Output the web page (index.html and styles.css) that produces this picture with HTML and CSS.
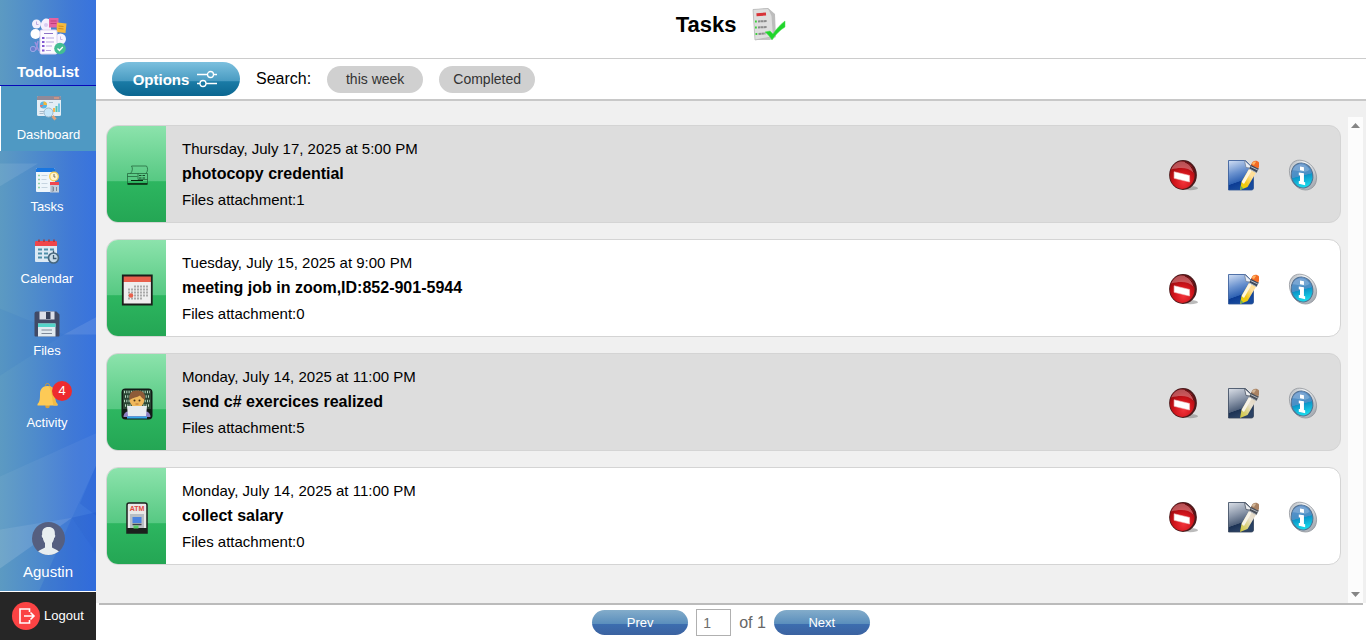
FILE: index.html
```html
<!DOCTYPE html>
<html lang="en">
<head>
<meta charset="utf-8">
<meta name="viewport" content="width=device-width, initial-scale=1">
<title>TodoList - Tasks</title>
<link rel="stylesheet" href="styles.css">
</head>
<body>
<svg class="defs" aria-hidden="true">
  <defs>
    <radialGradient id="gRed" cx=".55" cy=".75" r=".75"><stop offset="0" stop-color="#f2333a"/><stop offset=".5" stop-color="#d0141b"/><stop offset="1" stop-color="#8f060b"/></radialGradient>
    <linearGradient id="gDoc" x1="0" y1="0" x2=".3" y2="1"><stop offset="0" stop-color="#d3e0f4"/><stop offset=".45" stop-color="#6a92cf"/><stop offset=".76" stop-color="#2f62b3"/><stop offset=".78" stop-color="#0c3c94"/><stop offset="1" stop-color="#174a9c"/></linearGradient>
    <linearGradient id="gDocOff" x1="0" y1="0" x2=".3" y2="1"><stop offset="0" stop-color="#dbe0e8"/><stop offset=".45" stop-color="#8b97aa"/><stop offset=".76" stop-color="#4e5f79"/><stop offset=".78" stop-color="#1c3254"/><stop offset="1" stop-color="#2b4264"/></linearGradient>
    <linearGradient id="gPen" x1="1" y1="0" x2="0" y2="1"><stop offset="0" stop-color="#ffe08a"/><stop offset=".4" stop-color="#ffdf9c"/><stop offset=".7" stop-color="#f2c713"/><stop offset="1" stop-color="#e5d800"/></linearGradient>
    <linearGradient id="gPenOff" x1="1" y1="0" x2="0" y2="1"><stop offset="0" stop-color="#ddd0b8"/><stop offset=".45" stop-color="#e8e0d0"/><stop offset=".75" stop-color="#d8cf70"/><stop offset="1" stop-color="#cfc83a"/></linearGradient>
    <linearGradient id="gInfo" x1="0" y1="0" x2="0" y2="1"><stop offset="0" stop-color="#5f8fc8"/><stop offset=".5" stop-color="#4790c6"/><stop offset=".52" stop-color="#0c94c8"/><stop offset="1" stop-color="#19e0ee"/></linearGradient>
    <linearGradient id="gRim" x1="0" y1="0" x2="1" y2="1"><stop offset="0" stop-color="#9ba1a8"/><stop offset=".3" stop-color="#f3f5f7"/><stop offset=".65" stop-color="#c9cdd2"/><stop offset="1" stop-color="#9298a0"/></linearGradient>
  </defs>
  <symbol id="remove" viewBox="0 0 32 34">
    <ellipse cx="24" cy="31" rx="8" ry="2.200" fill="#777" opacity=".5"/>
    <ellipse cx="16" cy="17" rx="14.800" ry="16" fill="#4c1a1c"/>
    <ellipse cx="15.200" cy="17" rx="13.200" ry="14.800" fill="url(#gRed)"/>
    <path d="M3.500 11C8 1 18 0 25 8l3 7C21 8 12 9 3.500 11z" fill="#fff" opacity=".3"/>
    <path d="M18 3c5 2 8 6 10 12" stroke="#5c0a0d" fill="none"/>
    <path d="M6.500 13.500l16.500 4v7l-16.500-4z" fill="#fff" stroke="#f3c5c5" stroke-width=".6"/>
  </symbol>
  <symbol id="edit" viewBox="0 0 32 32">
    <path d="M1.500 1.500h17l8 8v19.500a2 2 0 0 1-2 2h-23z" fill="url(#gDoc)" stroke="#2c5394" stroke-width=".8"/>
    <path d="M17.500 1.500l1.500 7 7.500 1z" fill="#e9eef5" stroke="#6a7890" stroke-width=".7"/>
    <path d="M13 31l1.500-8L24 6.500l7 4L20.500 28z" fill="url(#gPen)"/>
    <path d="M14.500 23L24 7l2.500 1.500L17 25z" fill="#fff6dc"/>
    <path d="M22 10l7.500 4 2.300-4.500L24.500 5z" fill="#3d4a5e"/>
    <path d="M22.500 10l7 3.800M23.800 7.700l7 3.300" stroke="#d4dbe4" stroke-width=".8"/>
    <path d="M24.200 6C25 2 28 1 30.500 2.200s2.500 3.500.8 7.200z" fill="#f36b25"/>
    <path d="M25 5c1-2.500 3-3 4-2l-2 3z" fill="#ffb45f"/>
    <path d="M13 31l1-4 2.500 2.500z" fill="#6fae5c"/>
  </symbol>
  <symbol id="edit-off" viewBox="0 0 32 32">
    <path d="M1.500 1.500h17l8 8v19.500a2 2 0 0 1-2 2h-23z" fill="url(#gDocOff)" stroke="#334259" stroke-width=".8"/>
    <path d="M17.500 1.500l1.500 7 7.500 1z" fill="#eceef1" stroke="#4c5563" stroke-width=".8"/>
    <path d="M13 31l1.500-8L24 6.500l7 4L20.500 28z" fill="url(#gPenOff)"/>
    <path d="M14.500 23L24 7l2.500 1.500L17 25z" fill="#f7f3e8"/>
    <path d="M22 10l7.500 4 2.300-4.500L24.500 5z" fill="#4a505a"/>
    <path d="M22.500 10l7 3.800M23.800 7.700l7 3.300" stroke="#c9cdd3" stroke-width=".8"/>
    <path d="M24.200 6C25 2 28 1 30.500 2.200s2.500 3.500.8 7.200z" fill="#a98263"/>
    <path d="M25 5c1-2.500 3-3 4-2l-2 3z" fill="#d1b698"/>
  </symbol>
  <symbol id="info" viewBox="0 0 32 34">
    <path d="M1.500 12C2 4 8 0 15 1.500c9 1.500 15.500 10 15.500 18.500 0 8-5 13-12 13C9 33 1 22 1.500 12z" fill="url(#gRim)" stroke="#8d9298" stroke-width=".8"/>
    <ellipse cx="15" cy="17.500" rx="11.500" ry="13.500" fill="url(#gInfo)" stroke="#53708f" transform="rotate(-14 15 17.500)"/>
    <path d="M5 12C7 4 18 3 23 11c-5 5-12 1-18 1z" fill="#fff" opacity=".2"/>
    <path d="M12.800 8l4.200.8v4l-4.200-.8zM11.500 14.200l5.500 1v9.300l1.300.3v3l-6.800-1.500v-3l1.300.2v-6l-1.300-.3z" fill="#fff"/>
  </symbol>
</svg>
<div class="app">
  <aside class="sidebar">
    <svg class="sidebar-art" viewBox="0 0 96 591" preserveAspectRatio="none" aria-hidden="true">
      <path d="M0 151h38L0 172z" fill="#fff" opacity=".09"/>
      <path d="M96 293v16H64z" fill="#fff" opacity=".1"/>
      <path d="M0 285l64 24L0 347z" fill="#145cc0" opacity=".07"/>
      <path d="M96 430v46L80 465z" fill="#0e45c0" opacity=".15"/>
      <path d="M0 489l72-11L0 525z" fill="#fff" opacity=".13"/>
      <path d="M72 478L96 430v-30L0 440v49z" fill="#fff" opacity=".05"/>
      <path d="M72 478l24-5v38z" fill="#0b3fc4" opacity=".2"/>
      <path d="M72 478L17 591h79v-80z" fill="#1252d2" opacity=".2"/>
    </svg>
    <a class="brand" href="#">
      <svg width="38" height="38" viewBox="0 0 38 38" aria-hidden="true">
        <circle cx="7.500" cy="7" r="4.500" fill="#f3f0fc"/><path d="M7.500 4.500V7.500h2" stroke="#bba9e0" fill="none"/>
        <circle cx="6.500" cy="17" r="5" fill="#fff"/><circle cx="31.500" cy="22" r="5.500" fill="#f7f4ff"/><path d="M31.500 19.500V22.500h2" stroke="#c3b4e4" fill="none"/>
        <path d="M14 3c3-3 7-1 8 1v9h-8c-3-2-3-7 0-10z" fill="#f5f1fd"/><circle cx="17" cy="8" r="2" fill="#d9ccf1"/>
        <rect x="20" y="1" width="9.500" height="9.500" fill="#e562a0"/><path d="M21.500 4h6M21.500 6.500h6" stroke="#bf3d7d"/>
        <path d="M28 5.500l9.500 1-1 9.500-9-1z" fill="#f5b93f"/><path d="M29.500 9l5 .5M29.500 11.500l5 .5" stroke="#d28c16"/>
        <circle cx="4" cy="32" r="2.700" fill="#6c7fd0" stroke="#9aa8e6"/><path d="M6 25l4 9M9 24l-2 9" stroke="#9c90dd" stroke-width="1.500"/>
        <rect x="11" y="13" width="17" height="24" rx="1.500" fill="#fcfaff" stroke="#ddd2f0"/>
        <path d="M15 16.500h9" stroke="#8d74c6"/><path d="M17 21H25M17 25H25M17 29H23M17 33.500H22" stroke="#b9a6df"/>
        <path d="M13 21h2.500M13 25H15.500M13 29H15.500M13 33.500H15.500" stroke="#8158d2" stroke-width="2.200"/>
        <circle cx="31" cy="31.500" r="5.800" fill="#43bd93"/><path d="M28.500 31.500l2 2 3.300-3.500" stroke="#fff" stroke-width="1.300" fill="none"/>
      </svg>
      <span>TodoList</span>
    </a>
    <nav class="nav">
      <a class="nav-item active" href="#">
        <svg width="26" height="26" viewBox="0 0 26 26" aria-hidden="true">
          <rect x="1" y="1" width="24" height="20" rx="1.500" fill="#e3edf5"/><path d="M1 5V2.500C1 1.500 1.500 1 2.500 1h21c1 0 1.500.5 1.500 1.500V5z" fill="#8f8a99"/><path d="M18 3h5" stroke="#ee9a7a" stroke-width="1.200"/>
          <circle cx="7.500" cy="10" r="3.500" fill="#55b5e6"/><path d="M7.500 10V6.500A3.500 3.500 0 0 1 11 10z" fill="#f4b73d"/><path d="M7.500 10L5 12.500A3.500 3.500 0 0 1 4 10z" fill="#e9726a"/>
          <path d="M3.500 16.500h6M3.500 18.500h4M13 7.500h4" stroke="#a7bccb"/><path d="M18 17v-4" stroke="#f7b352" stroke-width="2"/><path d="M20.500 17v-6" stroke="#57c4ae" stroke-width="2"/><path d="M23 17V8.500" stroke="#4cb6df" stroke-width="1.500"/>
          <circle cx="12.500" cy="17.500" r="4.500" fill="#c6e7fa" stroke="#9db9cd"/><path d="M16.500 21l3 3.500" stroke="#e0a27a" stroke-width="2.800"/>
        </svg>
        <span>Dashboard</span>
      </a>
      <a class="nav-item" href="#">
        <svg width="26" height="26" viewBox="0 0 26 26" aria-hidden="true">
          <rect x="2" y="1" width="19" height="24" rx="1" fill="#eef5fb"/><path d="M2 5V2.500C2 1.500 2.500 1 3.500 1h16c1 0 1.500.5 1.500 1.500V5z" fill="#1976e0"/>
          <path d="M4 8.500h2M4 12.500h2M4 16.500h2M4 20.500h2" stroke="#8fd3a8" stroke-width="1.500"/><path d="M7.500 8.500h6M7.500 12.500h5M7.500 16.500h6M7.500 20.500h6" stroke="#c6d4e0"/>
          <circle cx="20" cy="9.500" r="4.300" fill="#fff4cd" stroke="#f6cf55" stroke-width="1.300"/><path d="M20 7V10H21.500" stroke="#7f7256" fill="none"/>
          <rect x="16" y="15" width="9" height="10.500" fill="#c3cedb"/><path d="M16 15h9v3h-9z" fill="#f04750"/><path d="M17.500 20h2v4h-2M17.500 22h2M22.500 20v4" stroke="#7c8996" fill="none"/>
        </svg>
        <span>Tasks</span>
      </a>
      <a class="nav-item" href="#">
        <svg width="26" height="26" viewBox="0 0 26 26" aria-hidden="true">
          <rect x="1" y="3" width="22" height="20" rx="1" fill="#dce9f4"/><path d="M1 7V3.500C1 2.500 1.500 2 2.500 2h19c1 0 1.500.5 1.500 1.500V7z" fill="#f0454b"/><path d="M5 .5V3M10 .5V3M15 .5V3M20 .5V3" stroke="#a3383f" stroke-width="1.500"/>
          <path d="M4 10.500h4M10 10.500h4M16 10.500h4M4 14.500h4M10 14.500h4M4 18.500h4M10 18.500h4" stroke="#4f8fa9" stroke-width="2"/>
          <circle cx="19.500" cy="19" r="5" fill="#c9dce8" stroke="#47677e" stroke-width="1.700"/><path d="M19.500 16v3.500h3M19.500 11.500V14" stroke="#3d5a70" stroke-width="1.300" fill="none"/>
        </svg>
        <span>Calendar</span>
      </a>
      <a class="nav-item" href="#">
        <svg width="26" height="26" viewBox="0 0 26 26" aria-hidden="true">
          <path d="M2.500.5h20l3 3v21c0 .6-.4 1-1 1H1.500a1 1 0 0 1-1-1v-22a2 2 0 0 1 2-2z" fill="#414a66"/>
          <path d="M5.500.5h15v8h-15z" fill="#dcdfe9"/><path d="M12 1h4.500v7H12z" fill="#363f5a"/>
          <path d="M4 12.500h17.500v13H4z" fill="#e1eaf0"/><path d="M4 12.500h17.500V16H4z" fill="#53d4c8"/><path d="M7.500 19h10.500M7.500 22.500h10.500" stroke="#7f8a99"/>
        </svg>
        <span>Files</span>
      </a>
      <a class="nav-item" href="#">
        <svg width="26" height="26" viewBox="0 0 26 26" aria-hidden="true">
          <circle cx="13.500" cy="2.500" r="2" fill="none" stroke="#c99a3e"/><circle cx="13.500" cy="23" r="2.300" fill="#d8a23d"/>
          <path d="M13.500 3c5 0 7.500 3.500 7.500 8 0 6 .5 8 2.500 10v1.500h-20V21C5.500 19 6 17 6 11c0-4.500 2.500-8 7.500-8z" fill="#fdca56"/><path d="M14.500 3c4.500.5 6.500 4 6.500 8 0 6 .5 8 2.500 10v1.500h-4C18 16 18 8 14.500 3z" fill="#f3bb44"/>
        </svg>
        <span>Activity</span>
        <span class="badge">4</span>
      </a>
    </nav>
    <a class="user" href="#">
      <svg width="33" height="33" viewBox="0 0 33 33" aria-hidden="true">
        <clipPath id="av"><circle cx="16.500" cy="16.500" r="16.500"/></clipPath>
        <g clip-path="url(#av)"><path d="M0 0h33v33H0z" fill="#555f80"/><path d="M16.500 5c4.800 0 6.800 3 6.300 7.500.8.500.5 3-.7 3.500-.3 2.500-1.300 4-2.100 5v4.500c2 1.500 6 2.500 7.500 4.500v4h-22v-4c1.500-2 5.500-3 7.500-4.500V21c-.8-1-1.800-2.500-2.100-5-1.200-.5-1.500-3-.7-3.500C9.700 8 11.700 5 16.500 5z" fill="#e8eef0"/></g>
      </svg>
      <span>Agustin</span>
    </a>
    <button class="logout" type="button">
      <svg width="28" height="28" viewBox="0 0 28 28" aria-hidden="true">
        <circle cx="14" cy="14" r="14" fill="#fb4344"/><path d="M17.500 10V7H8v14h9.500v-3M12 14h10M18.500 10.500L22 14l-3.500 3.500" fill="none" stroke="#fff" stroke-width="1.600"/>
      </svg>
      <span>Logout</span>
    </button>
  </aside>

  <main class="main">
    <header class="page-head">
      <h1>Tasks</h1>
      <svg width="34" height="34" viewBox="0 0 34 34" aria-hidden="true">
        <path d="M1 1.500L16 0l7 6 1 23-6 3H3z" fill="#c4c4c4"/><path d="M1 1.500L16 .5l5 6 1 22L3 32z" fill="#dedede" stroke="#b4b4b4" stroke-width=".7"/>
        <path d="M16 .5l7 6v22l-2 1L19.500 8z" fill="#bdbdbd"/><path d="M4.500 6.700l9.500-.7" stroke="#d83338" stroke-width="3"/>
        <path d="M3 13.500h1.800M3 19.500h1.800M3.500 26h1.800" stroke="#3bd03b" stroke-width="2"/><path d="M6 13.500l9-.5M6 19.500l9-.5M6.500 26l7-.5" stroke="#8b8b8b" stroke-width="2" stroke-dasharray="2.500 .4"/>
        <path d="M13 24l5-1 3 3C25 20 29 16 33 13v6c-5 3-9 7-13 13-2-3-4-6-7-8z" fill="#20d52b" stroke="#4bdc53" stroke-width=".5"/>
      </svg>
    </header>

    <div class="toolbar">
      <button class="options" type="button">Options
        <svg width="20" height="18" viewBox="0 0 20 18" aria-hidden="true"><path d="M0 4.500h10.500M17 4.500h3M0 13.500h3M9 13.500h11" stroke="#fff" stroke-width="1.300"/><circle cx="13.500" cy="4.500" r="3" fill="none" stroke="#fff" stroke-width="1.300"/><circle cx="6" cy="13.500" r="3" fill="none" stroke="#fff" stroke-width="1.300"/></svg>
      </button>
      <span class="search-label">Search:</span>
      <button class="chip" type="button">this week</button>
      <button class="chip" type="button">Completed</button>
    </div>

    <section class="list-area">
      <div class="cards">
        <article class="card shaded">
          <div class="stripe">
            <svg width="32" height="32" viewBox="0 0 32 32" aria-hidden="true"><g fill="none" stroke="#1c5c35" stroke-width=".7"><path d="M9.500 13.500c2-2 2.500-5.500 1-7.500h15c1.500 2 1.500 5-.5 7.500"/><path d="M6.500 13.500h20v10h-20zM6.500 16.500h10M17 13.500v6h9.500"/></g><path d="M18 15.500h7M18 18h7" stroke="#174c2b" stroke-width="1.200" stroke-dasharray="2.500 1"/><path d="M6.500 24h20" stroke="#08250f" stroke-width="1.300"/><path d="M10 20.500h12" stroke="#08250f" stroke-width="1.200"/></svg>
          </div>
          <div class="card-text"><time>Thursday, July 17, 2025 at 5:00 PM</time><h2>photocopy credential</h2><p>Files attachment:1</p></div>
          <div class="actions">
            <button type="button" aria-label="Delete"><svg width="30" height="32"><use href="#remove"/></svg></button>
            <button type="button" aria-label="Edit"><svg width="32" height="32"><use href="#edit"/></svg></button>
            <button type="button" aria-label="Details"><svg width="30" height="32"><use href="#info"/></svg></button>
          </div>
        </article>
        <article class="card">
          <div class="stripe">
            <svg width="32" height="32" viewBox="0 0 32 32" aria-hidden="true"><path d="M1.500 1h29v30h-29z" fill="#eee"/><path d="M1.500 1h29v7h-29z" fill="#e8604c"/><path d="M13 12.500h14M7 15.500h20M7 18.500h20M7 21.500h20M7 24.500h14" stroke="#a9a9a9" stroke-width="2" stroke-dasharray="2 1"/><circle cx="10" cy="21.500" r="2.300" fill="#e8604c"/><path d="M1.800 1.500h29v29h-29z" fill="none" stroke="#1a1f1b" stroke-width="1.800"/></svg>
          </div>
          <div class="card-text"><time>Tuesday, July 15, 2025 at 9:00 PM</time><h2>meeting job in zoom,ID:852-901-5944</h2><p>Files attachment:0</p></div>
          <div class="actions">
            <button type="button" aria-label="Delete"><svg width="30" height="32"><use href="#remove"/></svg></button>
            <button type="button" aria-label="Edit"><svg width="32" height="32"><use href="#edit"/></svg></button>
            <button type="button" aria-label="Details"><svg width="30" height="32"><use href="#info"/></svg></button>
          </div>
        </article>
        <article class="card shaded">
          <div class="stripe">
            <svg width="32" height="32" viewBox="0 0 32 32" aria-hidden="true"><rect x=".5" y=".5" width="31" height="31" rx="4" fill="#111b16"/><rect x="2" y="2" width="28" height="19" fill="#2a4534"/><g stroke="#b7d9c0" stroke-width="2.600" stroke-dasharray="1 1.300"><path d="M3 4h26M4 8.500h25M3 13h26M4 17.500h25"/></g>
              <path d="M2.500 29c0-4 3-6 7-6h13c4 0 7 2 7 6z" fill="#8c7fc0"/><circle cx="16" cy="12" r="7.300" fill="#efb85c"/><path d="M8.500 12C7.500 5 11 2 16.500 2.500c6 0 8.500 4 7.500 9.500-2-1-4-3-5-4.500-3 2-7 2-10.500 4.500z" fill="#8e5b38"/><circle cx="13.500" cy="12.500" r="1" fill="#4c3217"/><circle cx="18.500" cy="12.500" r="1" fill="#4c3217"/><path d="M14.500 16h3" stroke="#a8612b" stroke-width=".8"/><path d="M6 18h20l-1 10H7z" fill="#e6ebef"/><path d="M6 29.500h20" stroke="#34a8e8" stroke-width="1.800"/></svg>
          </div>
          <div class="card-text"><time>Monday, July 14, 2025 at 11:00 PM</time><h2>send c# exercices realized</h2><p>Files attachment:5</p></div>
          <div class="actions">
            <button type="button" aria-label="Delete"><svg width="30" height="32"><use href="#remove"/></svg></button>
            <button type="button" aria-label="Edit" disabled><svg width="32" height="32"><use href="#edit-off"/></svg></button>
            <button type="button" aria-label="Details"><svg width="30" height="32"><use href="#info"/></svg></button>
          </div>
        </article>
        <article class="card">
          <div class="stripe">
            <svg width="32" height="32" viewBox="0 0 32 32" aria-hidden="true"><path d="M6 31V3a2 2 0 0 1 2-2h16a2 2 0 0 1 2 2v28z" fill="#e8e8e8" stroke="#1b211d" stroke-width="1.500"/><text x="16" y="9" text-anchor="middle" class="atm">ATM</text><path d="M9 12h14v14H9z" fill="#b8bec4"/><path d="M11.500 15h9v6h-9z" fill="#4b83e0"/><path d="M11.500 22.500h9" stroke="#3b4148" stroke-width="1.500"/><path d="M6 26h20v5H6z" fill="#1b211d"/><path d="M12.500 23.500h5v3h-5z" fill="#55cc66"/></svg>
          </div>
          <div class="card-text"><time>Monday, July 14, 2025 at 11:00 PM</time><h2>collect salary</h2><p>Files attachment:0</p></div>
          <div class="actions">
            <button type="button" aria-label="Delete"><svg width="30" height="32"><use href="#remove"/></svg></button>
            <button type="button" aria-label="Edit" disabled><svg width="32" height="32"><use href="#edit-off"/></svg></button>
            <button type="button" aria-label="Details"><svg width="30" height="32"><use href="#info"/></svg></button>
          </div>
        </article>
      </div>
      <div class="scrollbar" aria-hidden="true">
        <svg width="9" height="5" viewBox="0 0 9 5"><path d="M0 5l4.500-5L9 5z" fill="#858585"/></svg>
        <svg width="9" height="5" viewBox="0 0 9 5"><path d="M0 0l4.500 5L9 0z" fill="#858585"/></svg>
      </div>
    </section>

    <footer class="pager">
      <button type="button" class="page-btn">Prev</button>
      <input class="page-input" type="text" value="1" aria-label="Page">
      <span class="page-total">of 1</span>
      <button type="button" class="page-btn">Next</button>
    </footer>
  </main>
</div>
</body>
</html>
```

FILE: styles.css
```css
* { box-sizing: border-box; }

body {
  margin: 0;
  font-family: "Liberation Sans", Arial, sans-serif;
  font-size: 15px;
  color: #000;
  background: #fff;
}

h1, h2, p { margin: 0; }
button, input { font-family: inherit; margin: 0; }
button { border: 0; cursor: pointer; }
a { color: inherit; text-decoration: none; }
svg { display: block; flex: none; }

.defs { position: absolute; width: 0; height: 0; }

.app { display: flex; min-height: 100vh; }

/* Sidebar */
.sidebar {
  position: relative;
  flex: none;
  display: flex;
  flex-direction: column;
  width: 96px;
  color: #fff;
  background: linear-gradient(90deg, #5c9ac2 0%, #4f8ccb 35%, #4079d6 75%, #3873de 100%);
}
.sidebar > * { position: relative; }
.sidebar .sidebar-art { position: absolute; inset: 0; width: 100%; height: 100%; }

.brand {
  display: flex;
  flex-direction: column;
  align-items: center;
  gap: 8px;
  padding: 17px 0 5px;
  border-bottom: 1px solid #0808b8;
  font-size: 15px;
  font-weight: bold;
  line-height: 17px;
}

.nav { display: flex; flex-direction: column; gap: 7px; }
.nav-item {
  position: relative;
  display: flex;
  flex-direction: column;
  align-items: center;
  gap: 6px;
  padding: 9px 2px 8px 0;
  font-size: 13px;
  line-height: 16px;
}
.nav-item.active {
  padding-right: 0;
  border-left: 1px solid #fff;
  background: #4f99c3;
}
.badge {
  position: absolute;
  top: 7px;
  left: 52px;
  width: 20px;
  height: 20px;
  border-radius: 50%;
  background: #ee2b2e;
  line-height: 20px;
  text-align: center;
}

.user {
  display: flex;
  flex-direction: column;
  align-items: center;
  gap: 8px;
  margin-top: auto;
  padding-bottom: 11px;
  border-bottom: 1px solid #fff;
  font-size: 15px;
  line-height: 17px;
}
.logout {
  display: flex;
  align-items: center;
  gap: 4px;
  padding: 10px 12px;
  color: #fff;
  background: #262626;
  font-size: 13px;
  line-height: 16px;
}

/* Main column */
.main { flex: 1; min-width: 0; display: flex; flex-direction: column; }

.page-head {
  display: flex;
  justify-content: center;
  align-items: center;
  gap: 16px;
  padding: 8px 0 16px;
  border-bottom: 1px solid #ccc;
}
.page-head h1 { font-size: 22px; line-height: 26px; }

.toolbar {
  display: flex;
  align-items: center;
  gap: 16px;
  padding: 3px 16px;
  border-bottom: 2px solid #c8c8c8;
}
.options {
  display: flex;
  align-items: center;
  justify-content: center;
  gap: 8px;
  width: 128px;
  height: 34px;
  padding: 0 8px 0 6px;
  border-radius: 17px;
  color: #fff;
  background: linear-gradient(#7cc0de 0%, #4a9cc2 55%, #1a7ba6 58%, #0b6690 100%);
  font-size: 15px;
  font-weight: bold;
}
.search-label { font-size: 16px; }
.chip {
  width: 96px;
  height: 27px;
  padding: 0;
  border-radius: 14px;
  background: #d0d0d0;
  color: #333;
  font-size: 14px;
}

.list-area {
  flex: 1;
  display: flex;
  gap: 7px;
  padding: 16px 3px 0 10px;
  background: #f0f0f0;
}
.cards {
  flex: 1;
  min-width: 0;
  display: flex;
  flex-direction: column;
  gap: 16px;
  padding: 8px 0 16px;
}
.card {
  display: flex;
  overflow: hidden;
  border: 1px solid #d4d4d4;
  border-radius: 12px;
  background: #fff;
}
.card.shaded { background: #ddd; }
.stripe {
  flex: none;
  display: flex;
  align-items: center;
  justify-content: center;
  width: 59px;
  padding-top: 4px;
  background: linear-gradient(#8ce3ac 0%, #57c983 57%, #2db660 58%, #24a654 100%);
}
.atm { font: bold 7px "Liberation Sans", Arial, sans-serif; fill: #e04a3c; }
.card-text { flex: 1; min-width: 0; padding: 13px 16px 12px; }
.card-text time { display: block; line-height: 19px; }
.card-text h2 { font-size: 16px; line-height: 32px; }
.card-text p { line-height: 20px; }
.actions {
  display: flex;
  align-items: center;
  gap: 28px;
  padding: 2px 21px 0 0;
}
.actions button {
  display: flex;
  justify-content: center;
  width: 32px;
  padding: 0;
  background: none;
}

.scrollbar {
  flex: none;
  display: flex;
  flex-direction: column;
  align-items: center;
  justify-content: space-between;
  width: 15px;
  padding: 6px 0;
  background: #fcfcfc;
}

.pager {
  display: flex;
  align-items: center;
  justify-content: center;
  gap: 8px;
  margin: 0 3px;
  padding: 4px 0;
  border-top: 2px solid #bbb;
}
.page-btn {
  width: 96px;
  height: 25px;
  border-radius: 13px;
  color: #fff;
  background: linear-gradient(#83acca 0%, #5b8fbd 54%, #3c6daf 57%, #3b62a0 100%);
  font-size: 13px;
}
.page-input {
  width: 35px;
  height: 27px;
  padding: 0 6px;
  border: 1px solid #b0b0b0;
  background: #fff;
  color: #6d6d6d;
  font-size: 14px;
}
.page-total { color: #666; font-size: 16px; }
```
